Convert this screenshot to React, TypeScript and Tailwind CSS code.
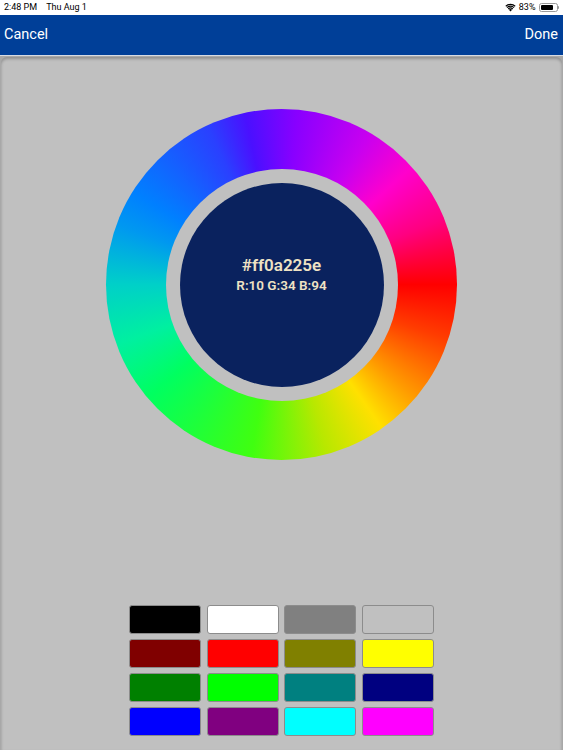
import React from "react";

const swatches = [
  "#000000", "#ffffff", "#808080", "#c0c0c0",
  "#800000", "#ff0000", "#808000", "#ffff00",
  "#008000", "#00ff00", "#008080", "#000080",
  "#0000ff", "#800080", "#00ffff", "#ff00ff",
];

function Wifi() {
  return (
    <svg width="11" height="9" viewBox="0 0 22 16" className="fill-black">
      <path d="M11 16l-3.2-3.6a4.6 4.6 0 0 1 6.4 0z" />
      <path d="M5.6 10a7.8 7.8 0 0 1 10.8 0l-1.6 1.8a5.4 5.4 0 0 0-7.6 0z" />
      <path d="M3.2 7.3a11.2 11.2 0 0 1 15.6 0l-1.6 1.8a8.8 8.8 0 0 0-12.4 0z" />
      <path d="M0.8 4.6a14.6 14.6 0 0 1 20.4 0l-1.6 1.8a12.2 12.2 0 0 0-17.2 0z" />
    </svg>
  );
}

function Battery() {
  return (
    <div className="flex items-center">
      <div className="w-[19px] h-[9px] rounded-[2.5px] border border-[#9a9a9a] p-[1px]">
        <div className="h-full w-[83%] bg-black rounded-[1px]" />
      </div>
      <div className="w-[1.5px] h-[3px] bg-[#9a9a9a] rounded-r-sm" />
    </div>
  );
}

export default function App() {
  return (
    <div
      className="w-[563px] h-[750px] flex flex-col bg-[#c0c0c0] overflow-hidden"
      style={{ fontFamily: "Roboto, 'Liberation Sans', Arial, sans-serif" }}
    >
      {/* status bar */}
      <div className="h-[15px] bg-white flex items-center justify-between px-[4px] text-[9px] text-black">
        <div className="flex gap-[9px]">
          <span>2:48 PM</span>
          <span>Thu Aug 1</span>
        </div>
        <div className="flex items-center gap-[3px]">
          <Wifi />
          <span>83%</span>
          <Battery />
        </div>
      </div>

      {/* nav bar */}
      <div className="h-[40px] bg-[#003f98] flex items-center justify-between px-[4px] text-white text-[14.5px]">
        <span>Cancel</span>
        <span className="pr-[1px]">Done</span>
      </div>
      <div className="h-[1px] bg-[#d6dbe4]" />

      {/* sheet */}
      <div className="flex-1 bg-[#a8a8a8] pt-[1px]">
        <div className="h-full mx-[1px] rounded-t-[6px] bg-[#c0c0c0] shadow-[inset_0_2px_3px_rgba(0,0,0,0.25)] flex flex-col items-center">
          {/* wheel */}
          <div
            className="mt-[52px] w-[351px] h-[351px] rounded-full flex items-center justify-center"
            style={{
              background:
                "conic-gradient(from 90deg, #ff0000 0deg, #ff3c00 18deg, #ff9a00 40deg, #ffe000 55deg, #b8e800 75deg, #40ff10 100deg, #00ff60 140deg, #00f0a0 160deg, #00d0c8 180deg, #0098f0 200deg, #0080ff 212deg, #2a40ff 245deg, #4a10ff 258deg, #8800ff 275deg, #c800f0 300deg, #ff00cc 318deg, #ff0080 338deg, #ff0000 360deg)",
            }}
          >
            <div className="w-[232px] h-[232px] rounded-full bg-[#c0c0c0] flex items-center justify-center">
              <div className="w-[204px] h-[204px] rounded-full bg-[#0a225e] flex flex-col items-center justify-center text-[#efe2c4] font-semibold">
                <span className="text-[17px] leading-[20px] mt-[-22px]">#ff0a225e</span>
                <span className="text-[13.5px] leading-[16px] mt-[2px]">R:10 G:34 B:94</span>
              </div>
            </div>
          </div>

          {/* swatches */}
          <div className="mt-[145px] grid grid-cols-4 gap-x-[5.5px] gap-y-[5px]">
            {swatches.map((c) => (
              <div
                key={c}
                className="w-[72px] h-[29px] rounded-[3px] border border-[#8c8c8c]"
                style={{ backgroundColor: c }}
              />
            ))}
          </div>
        </div>
      </div>
    </div>
  );
}
